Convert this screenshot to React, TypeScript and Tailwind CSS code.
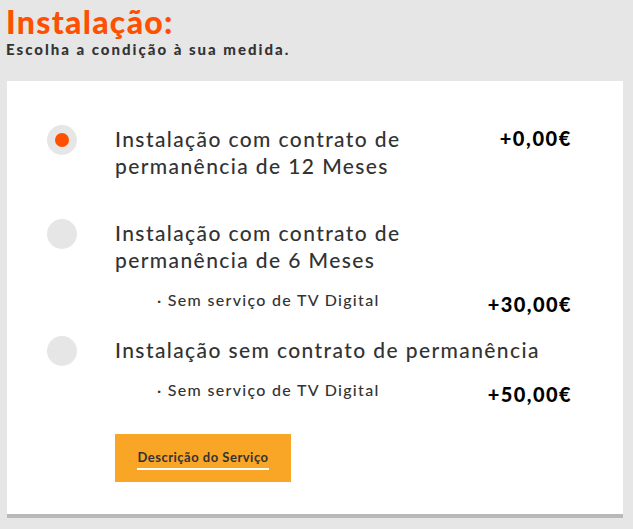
import React from "react";

const font = { fontFamily: "Lato, 'Open Sans', sans-serif" };

function Radio({ checked }: { checked?: boolean }) {
  return (
    <div className="w-[30px] h-[30px] rounded-full bg-[#e6e6e6] flex items-center justify-center shrink-0">
      {checked && <div className="w-[14px] h-[14px] rounded-full bg-[#ff4f00]" />}
    </div>
  );
}

export default function App() {
  return (
    <div className="w-[633px] h-[529px] bg-[#e6e6e6] overflow-hidden" style={font}>
      <div className="pl-[6px] pt-[3px]">
        <h1 className="text-[32px] leading-[38px] font-black text-[#ff5000] tracking-[1.3px]">Instalação:</h1>
        <p className="text-[15px] leading-[17px] font-black text-[#333] tracking-[2px]">Escolha a condição à sua medida.</p>
      </div>
      <div className="ml-[7px] mt-[23px] w-[616px] h-[437px] bg-white border-b-[4px] border-[#b8b8bb] pt-[44px] pl-[40px] pr-[51px]">
        {/* Row 1 */}
        <div className="flex">
          <Radio checked />
          <div className="ml-[38px] flex-1 text-[21px] leading-[27px] text-[#333] font-medium tracking-[1.4px]">
            Instalação com contrato de<br />permanência de 12 Meses
          </div>
          <div className="text-[20px] leading-[27px] font-black text-black tracking-[1.6px]">+0,00€</div>
        </div>
        {/* Row 2 */}
        <div className="flex mt-[40px]">
          <Radio />
          <div className="ml-[38px] flex-1">
            <div className="text-[21px] leading-[27px] text-[#333] font-medium tracking-[1.4px]">
              Instalação com contrato de<br />permanência de 6 Meses
            </div>
            <div className="flex justify-between items-start mt-[17px]">
              <div className="ml-[42px] text-[16px] leading-[20px] text-[#333] font-medium tracking-[1.3px]">· Sem serviço de TV Digital</div>
              <div className="text-[20px] leading-[24px] font-black text-black mt-[2px] tracking-[1.4px]">+30,00€</div>
            </div>
          </div>
        </div>
        {/* Row 3 */}
        <div className="flex mt-[20px]">
          <Radio />
          <div className="ml-[38px] flex-1">
            <div className="text-[21px] leading-[27px] text-[#333] font-medium tracking-[1.4px] whitespace-nowrap">
              Instalação sem contrato de permanência
            </div>
            <div className="flex justify-between items-start mt-[17px]">
              <div className="ml-[42px] text-[16px] leading-[20px] text-[#333] font-medium tracking-[1.3px]">· Sem serviço de TV Digital</div>
              <div className="text-[20px] leading-[24px] font-black text-black mt-[2px] tracking-[1.4px]">+50,00€</div>
            </div>
            <div className="mt-[28px] w-[176px] h-[48px] bg-[#f9a526] flex items-center justify-center">
              <span className="text-[13px] leading-[16px] font-bold text-[#333] border-b-2 border-white pb-[3px] mt-[2px] tracking-[0.5px]">Descrição do Serviço</span>
            </div>
          </div>
        </div>
      </div>
    </div>
  );
}
